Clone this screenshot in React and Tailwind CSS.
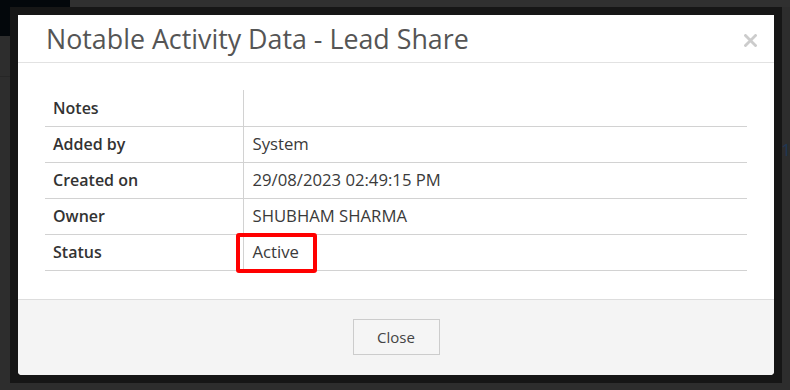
const ROWS = [
  { label: 'Notes', value: '' },
  { label: 'Added by', value: 'System' },
  { label: 'Created on', value: '29/08/2023 02:49:15 PM' },
  { label: 'Owner', value: 'SHUBHAM SHARMA' },
  { label: 'Status', value: 'Active', highlight: true },
]

function CloseX() {
  return (
    <svg width="13" height="13" viewBox="0 0 13 13" className="block">
      <path d="M1.5 1.5 L11.5 11.5 M11.5 1.5 L1.5 11.5" stroke="#cccccc" strokeWidth="2.8" strokeLinecap="square" />
    </svg>
  )
}

export default function App() {
  return (
    <div
      className="relative w-[790px] h-[390px] overflow-hidden bg-[#2d2d2d]"
      style={{ fontFamily: '"Open Sans", "Noto Sans", Arial, sans-serif' }}
    >
      {/* page behind the overlay */}
      <div className="absolute left-0 top-0 w-[70px] h-[36px] bg-[#03070b]" />
      <div className="absolute left-[70px] top-0 right-0 h-[7px] bg-[#303030]" />
      <div className="absolute left-0 top-[76px] w-[10px] h-px bg-[#262626]" />
      <span className="absolute left-[771px] top-[137px] text-[17px] text-[#1e3756]">o1</span>

      {/* modal frame */}
      <div className="relative ml-[10px] mt-[7px] w-[772px] h-[376px] bg-[#161616] p-[8px]">
        <div className="flex flex-col w-[756px] h-[360px] bg-white rounded-b-[4px] overflow-hidden">

          {/* header */}
          <div className="flex items-center justify-between h-[48px] pl-[28px] pr-[17px] border-b border-[#e2e2e2]">
            <h4 className="text-[26.8px] leading-none text-[#555555] mt-[2px]">
              Notable Activity Data - Lead Share
            </h4>
            <div className="mt-[4px]"><CloseX /></div>
          </div>

          {/* body */}
          <div className="px-[27px] pt-[27px] pb-[27px] h-[236px]">
            <table className="w-full border-collapse">
              <tbody>
                {ROWS.map((r) => (
                  <tr key={r.label} className="h-[36px] border-b border-[#d2d2d2]">
                    <td className="w-[198px] pl-[8px] text-[16px] font-semibold text-[#333333] border-r border-[#d2d2d2] align-middle">
                      {r.label}
                    </td>
                    <td className="relative pl-[9px] text-[16.7px] text-[#3a3a3a] align-middle">
                      {r.value}
                      {r.highlight && (
                        <div className="absolute left-[-8px] top-[-2px] w-[81px] h-[40px] border-[4px] border-[#ff0000] rounded-[3px]" />
                      )}
                    </td>
                  </tr>
                ))}
              </tbody>
            </table>
          </div>

          {/* footer */}
          <div className="flex-1 flex items-start justify-center pt-[19px] bg-[#f4f4f4] border-t border-[#dddddd]">
            <button className="w-[87px] h-[36px] border border-[#cccccc] bg-[#f5f5f5] text-[15px] text-[#444444]">
              Close
            </button>
          </div>
        </div>
      </div>
    </div>
  )
}
